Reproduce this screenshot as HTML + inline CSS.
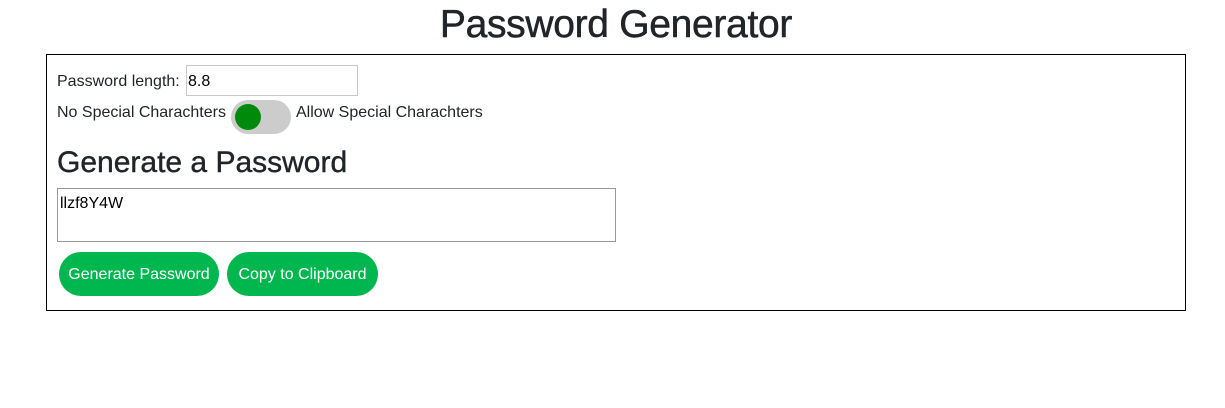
<!DOCTYPE html>
<html><head><style>
body{margin:0;width:1225px;height:408px;background:#fff;font-family:"Liberation Sans",sans-serif;color:#212529;position:relative;overflow:hidden}
.a{position:absolute;white-space:nowrap}
h1{position:absolute;margin:0;left:0;width:1232px;text-align:center;top:2px;font-size:39px;font-weight:normal;line-height:46px;-webkit-text-stroke:0.5px #212529;letter-spacing:-0.3px}
.box{position:absolute;left:46px;top:54px;width:1138px;height:255px;border:1px solid #000}
.t{font-size:16px;line-height:20px}
.btn{position:absolute;top:252px;height:44px;border-radius:22px;background:#00b74f;color:#fff;font-size:16px;line-height:45px;text-align:center}
</style></head><body>
<h1>Password Generator</h1>
<div class="box"></div>
<div class="a t" style="left:57px;top:72px">Password length:</div>
<div class="a" style="left:186px;top:65px;width:170px;height:29px;border:1px solid #c8c8c8"></div>
<div class="a t" style="left:188px;top:72px;color:#000">8.8</div>
<div class="a t" style="left:57px;top:103px">No Special Charachters</div>
<div class="a" style="left:231px;top:100px;width:60px;height:34px;border-radius:17px;background:#ccc"></div>
<div class="a" style="left:235px;top:104px;width:26px;height:26px;border-radius:50%;background:#008a0c"></div>
<div class="a t" style="left:296px;top:103px">Allow Special Charachters</div>
<div class="a" style="left:57px;top:144px;font-size:30px;line-height:38px;-webkit-text-stroke:0.4px #212529">Generate a Password</div>
<div class="a" style="left:57px;top:188px;width:557px;height:52px;border:1px solid #999"></div>
<div class="a t" style="left:60px;top:194px;color:#000">llzf8Y4W</div>
<div class="btn" style="left:59px;width:160px">Generate Password</div>
<div class="btn" style="left:227px;width:151px">Copy to Clipboard</div>
</body></html>
